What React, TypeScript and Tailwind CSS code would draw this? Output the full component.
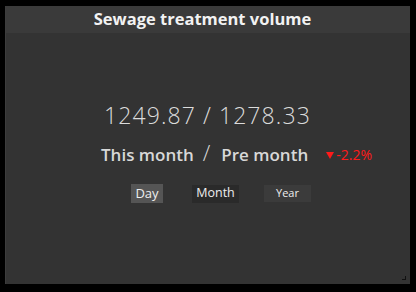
export default function App() {
  return (
    <div className="w-[416px] h-[292px] bg-black pt-[6px] pl-[5px]" style={{ fontFamily: '"Open Sans", "Noto Sans", sans-serif' }}>
      <div className="relative w-[405px] h-[278px] bg-[#333333] border-l border-[#3c3c3c] flex flex-col">
        <div className="h-[27px] bg-[#3a3a3a] flex items-center justify-center pr-[11px]">
          <span className="text-[16.5px] font-bold text-[#f2f2f2] leading-none">Sewage treatment volume</span>
        </div>
        <div className="flex flex-col pt-[71px]">
          <div className="pl-[98px] text-[23px] leading-none text-[#dcdcdc] font-light tracking-[1.1px] whitespace-nowrap">
            1249.87<span className="mx-[7px]">/</span>1278.33
          </div>
          <div className="mt-[14px] pl-[95px] flex items-end text-[#d8d8d8] font-semibold whitespace-nowrap">
            <span className="text-[17px] leading-none">This month</span>
            <span className="text-[22px] leading-none ml-[9px] mr-[11px] font-light">/</span>
            <span className="text-[17px] leading-none">Pre month</span>
            <span className="ml-[18px] mb-[1px] flex items-center text-[14px] leading-none text-[#ff1a1a] font-normal">
              <svg width="8" height="7" viewBox="0 0 8 7" className="mr-[2px] mt-[1px]">
                <polygon points="0,0 8,0 4,7" fill="#ff1a1a" />
              </svg>
              -2.2%
            </span>
          </div>
          <div className="flex items-center mt-[21px] pl-[125px] text-[#eeeeee]">
            <div className="w-[32px] h-[19px] bg-[#555555] flex items-center justify-center text-[13px]">Day</div>
            <div className="ml-[29px] w-[47px] h-[18px] bg-[#2a2a2a] flex items-center justify-center text-[12.5px]">Month</div>
            <div className="ml-[25px] w-[47px] h-[17px] bg-[#3b3b3b] flex items-center justify-center text-[11px]">Year</div>
          </div>
        </div>
        <div className="absolute right-[4px] bottom-[4px] w-[4px] h-[4px] border-r border-b border-[#111]" />
      </div>
    </div>
  );
}
